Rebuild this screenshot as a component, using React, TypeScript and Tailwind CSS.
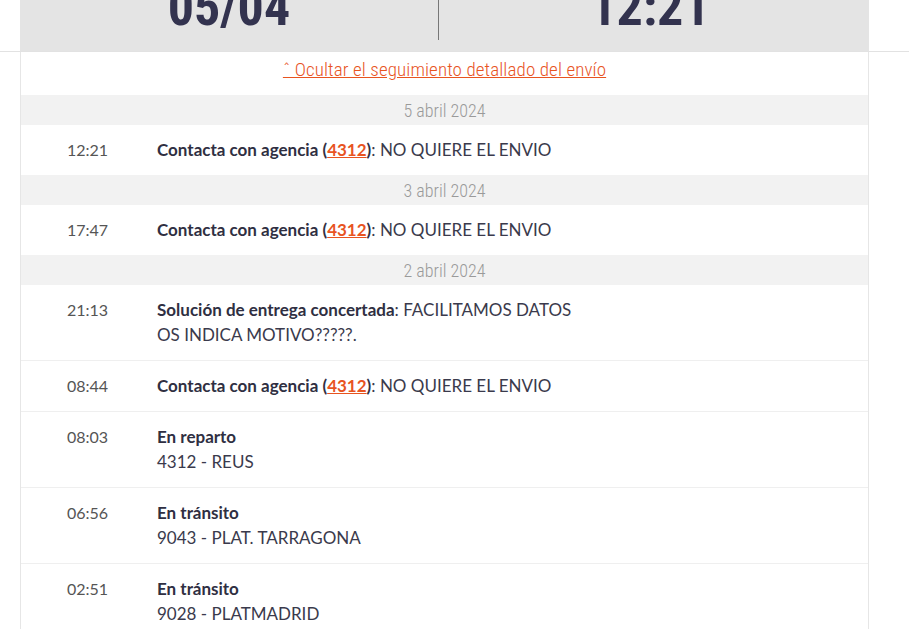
import React from "react";

type Event = {
  time: string;
  title: string;
  agency?: string;
  detail?: string;
  sub?: string;
};

type Day = { date: string; events: Event[] };

const days: Day[] = [
  {
    date: "5 abril 2024",
    events: [{ time: "12:21", title: "Contacta con agencia", agency: "4312", detail: "NO QUIERE EL ENVIO" }],
  },
  {
    date: "3 abril 2024",
    events: [{ time: "17:47", title: "Contacta con agencia", agency: "4312", detail: "NO QUIERE EL ENVIO" }],
  },
  {
    date: "2 abril 2024",
    events: [
      {
        time: "21:13",
        title: "Solución de entrega concertada",
        detail: "FACILITAMOS DATOS OS INDICA MOTIVO?????.",
      },
      { time: "08:44", title: "Contacta con agencia", agency: "4312", detail: "NO QUIERE EL ENVIO" },
      { time: "08:03", title: "En reparto", sub: "4312 - REUS" },
      { time: "06:56", title: "En tránsito", sub: "9043 - PLAT. TARRAGONA" },
      { time: "02:51", title: "En tránsito", sub: "9028 - PLATMADRID" },
    ],
  },
];

const narrow = "font-['Roboto_Condensed','Liberation_Sans_Narrow','Liberation_Sans',sans-serif]";

function EventRow({ ev, first }: { ev: Event; first: boolean }) {
  return (
    <div className={`flex pt-[12px] pb-[13px] leading-[25px] ${first ? "" : "border-t border-[#efefef]"}`}>
      <div className="w-[136px] shrink-0 pl-[46px] text-[16px] text-[#555]">{ev.time}</div>
      <div className="w-[432px] text-[17px] text-[#3a3a4c]">
        <span className="font-bold text-[#2f2f42]">{ev.title}</span>
        {ev.agency && (
          <span className="font-bold text-[#2f2f42]">
            {" ("}
            <a className="text-[#e8541f] underline" href="#">
              {ev.agency}
            </a>
            {")"}
          </span>
        )}
        {ev.detail && <span>: {ev.detail}</span>}
        {ev.sub && <div>{ev.sub}</div>}
      </div>
    </div>
  );
}

export default function App() {
  return (
    <div className="w-[909px] h-[629px] overflow-hidden bg-white font-['Lato','Noto_Sans',sans-serif] text-[16px]">
      <div className="border-b border-[#e2e2e2]">
        <div className="ml-[20px] w-[849px] h-[51px] bg-[#e4e4e4] flex overflow-hidden">
          <div className="w-[418px] flex justify-center">
            <span className={`${narrow} font-bold text-[52px] leading-none -mt-[18px] text-[#33334f]`}>05/04</span>
          </div>
          <div className="w-px h-[40px] bg-[#777]" />
          <div className="flex-1 flex justify-center">
            <span className={`${narrow} font-bold text-[52px] leading-none -mt-[18px] ml-[-8px] text-[#33334f]`}>12:21</span>
          </div>
        </div>
      </div>
      <div className="ml-[20px] w-[849px] border-x border-[#e6e6e6]">
        <div className="h-[43px] pb-[6px] flex items-center justify-center">
          <a href="#" className={`${narrow} text-[19px] font-light tracking-[0.1px] text-[#e8541f] underline`}>
            ˆ Ocultar el seguimiento detallado del envío
          </a>
        </div>
        {days.map((d) => (
          <div key={d.date}>
            <div className={`${narrow} h-[30px] bg-[#f2f2f2] flex items-center justify-center text-[18px] font-light text-[#9a9a9a]`}>
              {d.date}
            </div>
            {d.events.map((ev, i) => (
              <EventRow key={ev.time} ev={ev} first={i === 0} />
            ))}
          </div>
        ))}
      </div>
    </div>
  );
}
